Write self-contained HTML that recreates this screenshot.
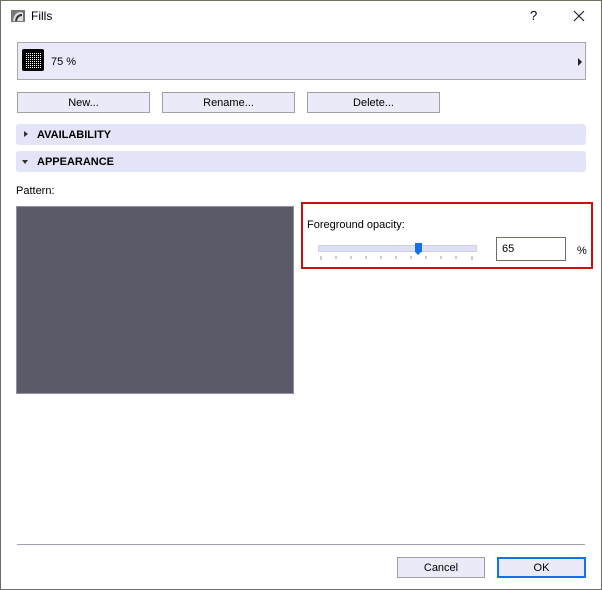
<!DOCTYPE html>
<html><head><style>
body{margin:0;width:602px;height:590px;overflow:hidden;background:#fff;font-family:"Liberation Sans",Tahoma,sans-serif;font-size:11px;color:#000}
.win{position:absolute;left:0;top:0;width:600px;height:588px;border:1px solid #6f6f5f;background:#fff}
.a{position:absolute}
.lav{background:#e9e9fa}
.btn{position:absolute;height:19px;border:1px solid #a0a0a0;background:#eaeaf8;text-align:center;line-height:21px;font-size:11px}
.bar{position:absolute;left:15px;width:570px;height:21px;background:#e4e4f8;border-radius:3px;font-weight:bold;line-height:22px}
</style></head><body>
<div class="win">
<svg class="a" style="left:9px;top:8px" width="16" height="14"><rect x="1" y="1" width="14" height="12" fill="#777"/><path d="M3 12 Q4 3 11 3 L13 4 L13 12 Z" fill="#ddd"/><path d="M6 12 Q7 6 12 6" stroke="#333" fill="none" stroke-width="2"/></svg>
<div class="a" style="left:30px;top:8px;font-size:12px">Fills</div>
<div class="a" style="left:529px;top:7px;font-size:13px">?</div>
<svg class="a" style="left:572px;top:9px" width="12" height="12"><path d="M1 1L11 11M11 1L1 11" stroke="#222" stroke-width="1.2"/></svg>
<div class="a lav" style="left:16px;top:41px;width:567px;height:36px;border:1px solid #a8a8a8"></div>
<svg class="a" style="left:21px;top:48px" width="22" height="22"><defs><pattern id="p" width="2" height="2" patternUnits="userSpaceOnUse"><rect width="1" height="1" fill="#fff"/></pattern></defs><rect width="22" height="22" rx="2" fill="#000"/><rect x="3" y="3" width="16" height="16" fill="url(#p)"/></svg>
<div class="a" style="left:50px;top:55px">75 %</div>
<div class="a" style="left:577px;top:57px;width:0;height:0;border-left:4px solid #222;border-top:4px solid transparent;border-bottom:4px solid transparent"></div>
<div class="btn" style="left:16px;top:91px;width:131px">New...</div>
<div class="btn" style="left:161px;top:91px;width:131px">Rename...</div>
<div class="btn" style="left:306px;top:91px;width:131px">Delete...</div>
<div class="bar" style="top:123px"><span style="position:absolute;left:8px;top:7px;border-left:4px solid #333;border-top:3.5px solid transparent;border-bottom:3.5px solid transparent"></span><span style="margin-left:21px">AVAILABILITY</span></div>
<div class="bar" style="top:150px"><span style="position:absolute;left:6px;top:9px;border-top:4px solid #333;border-left:3.5px solid transparent;border-right:3.5px solid transparent"></span><span style="margin-left:21px">APPEARANCE</span></div>
<div class="a" style="left:15px;top:184px">Pattern:</div>
<div class="a" style="left:15px;top:205px;width:276px;height:186px;background:#5a5a68;border:1px solid #9090a0"></div>
<div class="a" style="left:300px;top:201px;width:288px;height:63px;border:2px solid #c8100f"></div>
<div class="a" style="left:306px;top:218px">Foreground opacity:</div>
<div class="a" style="left:317px;top:244px;width:157px;height:5px;background:#e0e0f4;border:1px solid #d0d0ee"></div>
<div class="a" style="left:414px;top:242px;width:7px;height:9px;background:#1570f0"></div>
<div class="a" style="left:414px;top:251px;width:0;height:0;border-top:3px solid #1570f0;border-left:3.5px solid transparent;border-right:3.5px solid transparent"></div>
<svg class="a" style="left:317px;top:255px" width="160" height="8"><g stroke="#999"><path d="M3 0v4M18 0v3M33 0v3M48 0v3M63 0v3M78 0v3M93 0v3M108 0v3M123 0v3M138 0v3M154 0v4"/></g></svg>
<div class="a" style="left:495px;top:236px;border:1px solid #707060;line-height:22px;padding-left:5px;box-sizing:border-box;width:70px;height:24px">65</div>
<div class="a" style="left:576px;top:244px">%</div>
<div class="a" style="left:16px;top:543px;width:568px;height:1px;background:#a0a0b0"></div>
<div class="btn" style="left:396px;top:556px;width:86px">Cancel</div>
<div class="btn" style="left:496px;top:556px;width:85px;border:2px solid #1570f0;height:17px;line-height:19px">OK</div>
</div>
</body></html>
